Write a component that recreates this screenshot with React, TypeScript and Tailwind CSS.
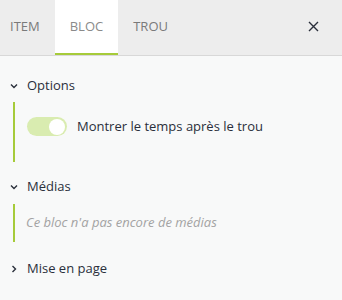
import React, { useState } from 'react';

const font = { fontFamily: '"Open Sans", "Noto Sans", sans-serif' };

function Chevron({ open }: { open: boolean }) {
  return (
    <svg width="10" height="10" viewBox="0 0 10 10" className="shrink-0">
      {open ? (
        <path d="M2 3.5 L5 6.5 L8 3.5" fill="none" stroke="#2a2f3b" strokeWidth="1.4" />
      ) : (
        <path d="M3.5 2 L6.5 5 L3.5 8" fill="none" stroke="#2a2f3b" strokeWidth="1.4" />
      )}
    </svg>
  );
}

export default function App() {
  const [tab, setTab] = useState('BLOC');
  const [showTime, setShowTime] = useState(true);

  const tabs = ['ITEM', 'BLOC', 'TROU'];

  return (
    <div className="w-[342px] h-[300px] bg-[#f8f9f9] overflow-hidden" style={font}>
      {/* Tabs header */}
      <div className="h-[56px] bg-[#ededed] border-b border-[#d8d8d8] flex items-stretch">
        {tabs.map((t, i) => (
          <button
            key={t}
            onClick={() => setTab(t)}
            className={`relative flex items-center pb-[2px] text-[13px] ${i === 0 ? 'pl-[10px] pr-[15px]' : 'px-[15px]'} ${
              tab === t ? 'bg-white text-[#8a8a8a]' : 'text-[#7a7a7a]'
            }`}
          >
            {t}
            {tab === t && <span className="absolute left-0 right-0 bottom-0 h-[2px] bg-[#a6cb3a]" />}
          </button>
        ))}
        <div className="flex-1" />
        <button className="w-[58px] flex items-center justify-center pb-[3px]">
          <svg width="11" height="11" viewBox="0 0 11 11">
            <path d="M1 1 L10 10 M10 1 L1 10" stroke="#2a2f3b" strokeWidth="1.4" />
          </svg>
        </button>
      </div>

      {/* Sections */}
      <div className="pt-[21px] pl-[9px]">
        <div className="flex items-center gap-[8px] h-[18px]">
          <Chevron open />
          <span className="text-[13px] font-medium text-[#2a2f3b]">Options</span>
        </div>
        <div className="ml-[4px] mt-[7px] border-l-2 border-[#a6cb3a] pl-[12px] h-[60px] flex items-start pt-[15px]">
          <button
            onClick={() => setShowTime(!showTime)}
            className="w-[40px] h-[19px] rounded-full bg-[#d9ecb0] flex items-center justify-end pr-[2px]"
          >
            <span className="w-[16px] h-[16px] rounded-full bg-white" />
          </button>
          <span className="ml-[10px] text-[13px] leading-[19px] text-[#2a2f3b]">Montrer le temps après le trou</span>
        </div>

        <div className="flex items-center gap-[8px] h-[18px] mt-[16px]">
          <Chevron open />
          <span className="text-[13px] font-medium text-[#2a2f3b]">Médias</span>
        </div>
        <div className="ml-[4px] mt-[8px] border-l-2 border-[#a6cb3a] pl-[11px] h-[38px] flex items-center">
          <span className="text-[13px] italic text-[#a3a3a3]">Ce bloc n'a pas encore de médias</span>
        </div>

        <div className="flex items-center gap-[8px] h-[18px] mt-[18px]">
          <Chevron open={false} />
          <span className="text-[13px] font-medium text-[#2a2f3b]">Mise en page</span>
        </div>
      </div>
    </div>
  );
}
